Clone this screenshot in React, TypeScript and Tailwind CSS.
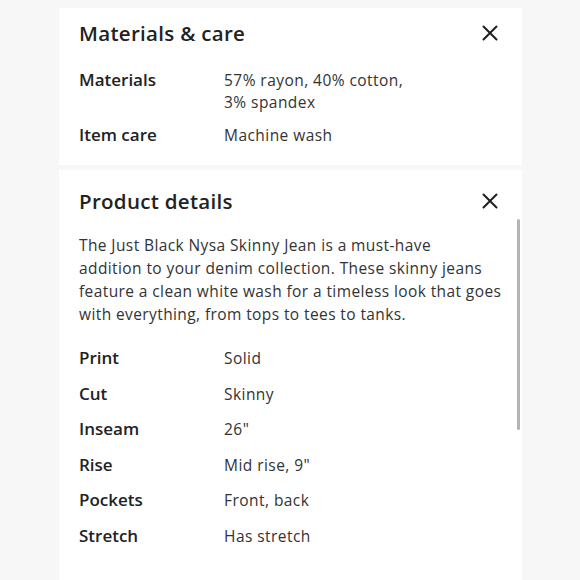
import React from 'react';

const CloseIcon = () => (
  <svg width="16" height="16" viewBox="0 0 16 16" fill="none" stroke="#1f1f1f" strokeWidth={2} strokeLinecap="round">
    <path d="M1.5 1.5l13 13M14.5 1.5l-13 13" />
  </svg>
);

const Row = ({ label, children }: { label: string; children: React.ReactNode }) => (
  <div className="flex">
    <div className="w-[145px] shrink-0 text-[17px] leading-[22px] font-semibold text-[#222]">{label}</div>
    <div className="text-[15.5px] leading-[22px] tracking-[0.45px] text-[#333]">{children}</div>
  </div>
);

const Header = ({ title }: { title: string }) => (
  <div className="flex items-center justify-between h-[28px]">
    <h2 className="text-[20.5px] font-semibold tracking-[0.3px] text-[#222]">{title}</h2>
    <div className="mr-[4px]">
      <CloseIcon />
    </div>
  </div>
);

const details = [
  ['Print', 'Solid'],
  ['Cut', 'Skinny'],
  ['Inseam', '26"'],
  ['Rise', 'Mid rise, 9"'],
  ['Pockets', 'Front, back'],
  ['Stretch', 'Has stretch'],
];

export default function App() {
  return (
    <div
      className="w-[580px] h-[580px] overflow-hidden bg-[#f7f7f7] pl-[59px] pt-[8px]"
      style={{ fontFamily: '"Open Sans", Lato, sans-serif' }}
    >
      <div className="w-[463px] flex flex-col gap-[5px]">
        {/* Materials & care */}
        <section className="bg-white px-[20px] pt-[11px] pb-[19px]">
          <Header title="Materials & care" />
          <div className="mt-[22px] flex flex-col gap-[11px]">
            <Row label="Materials">
              57% rayon, 40% cotton,
              <br />
              3% spandex
            </Row>
            <Row label="Item care">Machine wash</Row>
          </div>
        </section>

        {/* Product details */}
        <section className="relative bg-white px-[20px] pt-[17px] h-[420px]">
          <Header title="Product details" />
          <p className="mt-[19px] text-[15.5px] leading-[23px] tracking-[0.4px] text-[#333] whitespace-nowrap">
            The Just Black Nysa Skinny Jean is a must-have
            <br />
            addition to your denim collection. These skinny jeans
            <br />
            feature a clean white wash for a timeless look that goes
            <br />
            with everything, from tops to tees to tanks.
          </p>
          <div className="mt-[21px] flex flex-col gap-[13.6px]">
            {details.map(([label, value]) => (
              <Row key={label} label={label}>
                {value}
              </Row>
            ))}
          </div>
          <div className="absolute left-[458px] top-[49px] w-[3px] h-[211px] rounded-full bg-[#b3b3b3]" />
        </section>
      </div>
    </div>
  );
}
